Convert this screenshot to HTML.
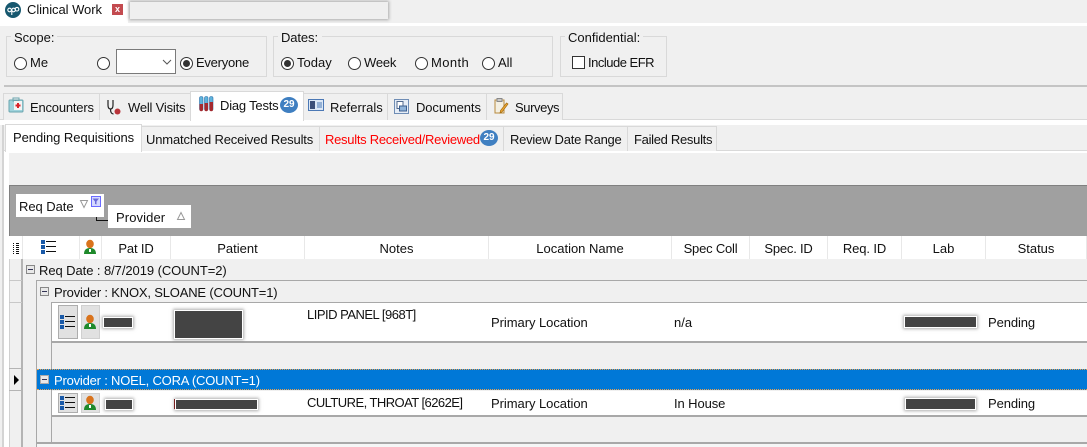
<!DOCTYPE html>
<html><head><meta charset="utf-8">
<style>
html,body{margin:0;padding:0;}
body{width:1087px;height:447px;overflow:hidden;position:relative;background:#f0f0f0;font-family:"Liberation Sans",sans-serif;font-size:13px;color:#111;}
.b{position:absolute;box-sizing:border-box;}
.t{position:absolute;white-space:nowrap;line-height:16px;height:16px;}
.c{position:absolute;white-space:nowrap;line-height:16px;height:16px;text-align:center;}
.r{position:absolute;width:13px;height:13px;box-sizing:border-box;border:1px solid #333;border-radius:50%;background:#fff;}
.r.on:after{content:"";position:absolute;left:2px;top:2px;width:7px;height:7px;border-radius:50%;background:#333;}
.g{position:absolute;box-sizing:border-box;border:1px solid #d9d9d9;}
.tab{position:absolute;box-sizing:border-box;border:1px solid #d9d9d9;border-bottom:none;background:#f0f0f0;}
.red{position:absolute;background:#444;border:1px solid #fff;box-shadow:0 0 3px 1px rgba(120,120,120,.6);box-sizing:border-box;}
.badge{position:absolute;border-radius:50%;background:#3f7fc1;color:#fff;font-size:10px;font-weight:bold;text-align:center;}
svg{position:absolute;overflow:visible;}
</style></head><body>

<!-- top strip -->
<div class="b" style="left:0;top:0;width:1087px;height:22px;background:#f0f0f0;"></div>
<div class="b" style="left:0;top:0;width:128px;height:25px;background:#fff;"></div>
<div class="b" style="left:0;top:23px;width:1087px;height:3px;background:#fff;"></div>
<div class="b" style="left:130px;top:2px;width:258px;height:17px;background:#efefef;box-shadow:0 0 3px 1px #aaa;"></div>
<svg style="left:5px;top:2px" width="16" height="16" viewBox="0 0 16 16"><circle cx="8" cy="8" r="8" fill="#17586f"/><circle cx="4.600" cy="8" r="1.800" fill="none" stroke="#fff" stroke-width="1.100"/><circle cx="8.600" cy="8" r="1.800" fill="none" stroke="#fff" stroke-width="1.100"/><path d="M6.800 8v5" stroke="#fff" stroke-width="1.100"/><circle cx="12" cy="7.200" r="1.800" fill="none" stroke="#fff" stroke-width="1.100"/></svg>
<div class="t" style="left:27px;top:2px;letter-spacing:-.05px;">Clinical Work</div>
<div class="b" style="left:112px;top:4px;width:11px;height:11px;background:#c34a4f;color:#fff;font-size:9px;font-weight:bold;line-height:10px;text-align:center;">x</div>

<!-- filter group boxes -->
<div class="g" style="left:6px;top:36px;width:261px;height:41px;"></div>
<div class="b" style="left:11px;top:30px;width:46px;height:14px;background:#f0f0f0;"></div>
<div class="t" style="left:14px;top:30px;">Scope:</div>
<div class="r" style="left:14px;top:57px;"></div><div class="t" style="left:30px;top:55px;letter-spacing:.1px;">Me</div>
<div class="r" style="left:97px;top:57px;"></div>
<div class="b" style="left:116px;top:49px;width:60px;height:25px;background:#fff;border:1px solid #7a7a7a;"></div>
<svg style="left:162px;top:59px" width="10" height="6"><path d="M1 1l4 4 4-4" fill="none" stroke="#555"/></svg>
<div class="r on" style="left:180px;top:57px;"></div><div class="t" style="left:196px;top:55px;letter-spacing:-.25px;">Everyone</div>

<div class="g" style="left:273px;top:36px;width:280px;height:41px;"></div>
<div class="b" style="left:278px;top:30px;width:44px;height:14px;background:#f0f0f0;"></div>
<div class="t" style="left:281px;top:30px;letter-spacing:-.1px;">Dates:</div>
<div class="r on" style="left:281px;top:57px;"></div><div class="t" style="left:297px;top:55px;">Today</div>
<div class="r" style="left:348px;top:57px;"></div><div class="t" style="left:364px;top:55px;letter-spacing:-.2px;">Week</div>
<div class="r" style="left:415px;top:57px;"></div><div class="t" style="left:431px;top:55px;letter-spacing:.4px;">Month</div>
<div class="r" style="left:482px;top:57px;"></div><div class="t" style="left:498px;top:55px;">All</div>

<div class="g" style="left:560px;top:36px;width:107px;height:41px;"></div>
<div class="b" style="left:565px;top:30px;width:78px;height:14px;background:#f0f0f0;"></div>
<div class="t" style="left:568px;top:30px;">Confidential:</div>
<div class="b" style="left:572px;top:56px;width:13px;height:13px;background:#fff;border:1px solid #333;"></div>
<div class="t" style="left:588px;top:55px;letter-spacing:-.5px;">Include EFR</div>

<div class="b" style="left:4px;top:85px;width:1083px;height:2px;background:#c4c4c4;"></div>

<!-- main tabs -->
<div class="b" style="left:0;top:119px;width:1087px;height:1px;background:#d9d9d9;"></div>
<div class="b" style="left:0;top:120px;width:1087px;height:5px;background:#fff;"></div>
<div class="tab" style="left:3px;top:93px;width:97px;height:27px;"></div>
<div class="tab" style="left:99px;top:93px;width:92px;height:27px;"></div>
<div class="tab" style="left:190px;top:91px;width:114px;height:30px;background:#fff;"></div>
<div class="tab" style="left:303px;top:93px;width:85px;height:27px;"></div>
<div class="tab" style="left:387px;top:93px;width:100px;height:27px;"></div>
<div class="tab" style="left:486px;top:93px;width:77px;height:27px;"></div>

<svg style="left:8px;top:97px" width="16" height="17" viewBox="0 0 16 17"><rect x="1" y="3" width="14" height="12" rx="1" fill="#9fd3dc" stroke="#6aa5ae"/><rect x="5" y="1" width="6" height="3" fill="none" stroke="#6aa5ae"/><rect x="6" y="4" width="8" height="9" fill="#f4f4f4"/><path d="M10 6v5M7.500 8.500h5" stroke="#d8232a" stroke-width="2"/></svg>
<div class="t" style="left:30px;top:100px;letter-spacing:-.2px;">Encounters</div>
<svg style="left:106px;top:99px" width="16" height="17" viewBox="0 0 16 17"><path d="M2 1v5c0 3 1 4 2.500 4S7 9 7 6V1M4.500 10c0 3 1 5 3 5" fill="none" stroke="#222" stroke-width="1.200"/><circle cx="11.500" cy="12.500" r="3" fill="#b8343a"/></svg>
<div class="t" style="left:128px;top:100px;letter-spacing:-.2px;">Well Visits</div>
<svg style="left:199px;top:96px" width="15" height="16" viewBox="0 0 15 16"><g stroke="#2a6ea8" stroke-width=".6"><rect x="0.500" y="0.500" width="3.500" height="14" rx="1.500" fill="#5fb3dc"/><rect x="5.500" y="0.500" width="3.500" height="14" rx="1.500" fill="#5fb3dc"/><rect x="10.500" y="0.500" width="3.500" height="14" rx="1.500" fill="#5fb3dc"/></g><path d="M.5 8h3.500v5.500a1.700 1.700 0 0 1-3.500 0zM5.500 7h3.500v6.500a1.700 1.700 0 0 1-3.500 0zM10.500 6h3.500v7.500a1.700 1.700 0 0 1-3.500 0z" fill="#a52a2f"/></svg>
<div class="t" style="left:220px;top:98px;letter-spacing:-.2px;">Diag Tests</div>
<div class="badge" style="left:280px;top:97px;width:18px;height:16px;line-height:16px;">29</div>
<svg style="left:308px;top:99px" width="16" height="13" viewBox="0 0 16 13"><rect x=".5" y=".5" width="15" height="11" fill="#dbe7f5" stroke="#4b78b5"/><rect x="2" y="2" width="5" height="8" fill="#3b4f78"/><path d="M9 4h5M9 6h5M9 8h5" stroke="#4b78b5"/></svg>
<div class="t" style="left:330px;top:100px;">Referrals</div>
<svg style="left:394px;top:99px" width="16" height="16" viewBox="0 0 16 16"><rect x=".5" y=".5" width="14" height="14" fill="#e6edf6" stroke="#6f8db5"/><rect x="3" y="2.500" width="6" height="7" fill="#fff" stroke="#50698f"/><rect x="5.500" y="7" width="7" height="5" fill="#8fb3d9" stroke="#3d5f8f"/></svg>
<div class="t" style="left:416px;top:100px;letter-spacing:-.1px;">Documents</div>
<svg style="left:494px;top:98px" width="16" height="17" viewBox="0 0 16 17"><rect x="1" y="2" width="9" height="13" fill="#f3efe2" stroke="#b78a3d"/><rect x="3" y="0.500" width="5" height="3" fill="#c9c9c9" stroke="#888"/><path d="M14 6l-6 8-2 1 .5-2.500 6-7.500z" fill="#eda733" stroke="#a46c12" stroke-width=".7"/></svg>
<div class="t" style="left:515px;top:100px;letter-spacing:-.4px;">Surveys</div>

<!-- secondary tabs -->
<div class="b" style="left:0;top:150px;width:1087px;height:1px;background:#d9d9d9;"></div>
<div class="b" style="left:0;top:151px;width:1087px;height:2px;background:#fff;"></div>
<div class="tab" style="left:5px;top:124px;width:137px;height:28px;background:#fff;"></div>
<div class="tab" style="left:141px;top:126px;width:179px;height:25px;"></div>
<div class="tab" style="left:319px;top:126px;width:185px;height:25px;"></div>
<div class="tab" style="left:503px;top:126px;width:125px;height:25px;"></div>
<div class="tab" style="left:627px;top:126px;width:90px;height:25px;"></div>
<div class="t" style="left:13px;top:130px;letter-spacing:-.05px;">Pending Requisitions</div>
<div class="t" style="left:146px;top:132px;letter-spacing:-.16px;">Unmatched Received Results</div>
<div class="t" style="left:325px;top:132px;color:#f00;letter-spacing:-.28px;">Results Received/Reviewed</div>
<div class="badge" style="left:480px;top:130px;width:18px;height:16px;line-height:15px;">29</div>
<div class="t" style="left:510px;top:132px;letter-spacing:-.24px;">Review Date Range</div>
<div class="t" style="left:634px;top:132px;letter-spacing:-.3px;">Failed Results</div>

<!-- left strip -->
<div class="b" style="left:0;top:153px;width:9px;height:294px;background:#fff;"></div>
<div class="b" style="left:0;top:125px;width:2px;height:322px;background:#f0f0f0;"></div>
<div class="b" style="left:2px;top:125px;width:2px;height:322px;background:#d4d4d4;"></div>

<!-- group-by band -->
<div class="b" style="left:9px;top:185px;width:1078px;height:51px;background:#a0a0a0;border-top:1px solid #808080;border-left:1px solid #808080;"></div>
<div class="b" style="left:96px;top:212px;width:1px;height:9px;background:#111;"></div>
<div class="b" style="left:96px;top:220px;width:12px;height:1px;background:#111;"></div>
<div class="b" style="left:16px;top:194px;width:88px;height:23px;background:#fff;"></div>
<div class="t" style="left:19px;top:199px;letter-spacing:-.05px;">Req Date</div>
<svg style="left:80px;top:200px" width="9" height="8"><path d="M.5.500h7l-3.500 7z" fill="none" stroke="#999"/></svg>
<div class="b" style="left:91px;top:196px;width:10px;height:11px;background:#d5d9ff;border:1px solid #6a6aff;"></div>
<svg style="left:92px;top:198px" width="8" height="7"><path d="M.5.500h6.500L4.500 3.500V6.500L3 6V3.500z" fill="#6a6ad8"/></svg>
<div class="b" style="left:108px;top:205px;width:83px;height:23px;background:#fff;"></div>
<div class="t" style="left:116px;top:210px;letter-spacing:.1px;">Provider</div>
<svg style="left:177px;top:212px" width="9" height="8"><path d="M.5 7.500h7L4 .5z" fill="none" stroke="#999"/></svg>

<!-- header -->
<div class="b" style="left:9px;top:236px;width:1078px;height:23px;background:#fff;"></div>
<div class="b" style="left:22px;top:236px;width:1px;height:23px;background:#e8e8e8;"></div>
<div class="b" style="left:79px;top:236px;width:1px;height:23px;background:#e8e8e8;"></div>
<div class="b" style="left:101px;top:236px;width:1px;height:23px;background:#e8e8e8;"></div>
<div class="b" style="left:170px;top:236px;width:1px;height:23px;background:#e8e8e8;"></div>
<div class="b" style="left:304px;top:236px;width:1px;height:23px;background:#e8e8e8;"></div>
<div class="b" style="left:488px;top:236px;width:1px;height:23px;background:#e8e8e8;"></div>
<div class="b" style="left:671px;top:236px;width:1px;height:23px;background:#e8e8e8;"></div>
<div class="b" style="left:749px;top:236px;width:1px;height:23px;background:#e8e8e8;"></div>
<div class="b" style="left:827px;top:236px;width:1px;height:23px;background:#e8e8e8;"></div>
<div class="b" style="left:901px;top:236px;width:1px;height:23px;background:#e8e8e8;"></div>
<div class="b" style="left:985px;top:236px;width:1px;height:23px;background:#e8e8e8;"></div>
<div class="b" style="left:1086px;top:236px;width:1px;height:23px;background:#e8e8e8;"></div>
<svg style="left:13px;top:243px" width="6" height="11"><path d="M0 .5h1M3 .5h3M0 2.500h1M3 2.500h3M0 4.500h1M3 4.500h3M0 6.500h1M3 6.500h3M0 8.500h1M3 8.500h3M0 10.500h1M3 10.500h3" stroke="#111"/></svg>
<svg style="left:41px;top:240px" width="16" height="14" viewBox="0 0 16 14"><g fill="#1a5aa8"><rect width="4" height="4"/><rect y="5" width="4" height="4"/><rect y="10" width="4" height="4"/></g><path d="M5 1.500h10M5 6.500h10M5 11.500h10" stroke="#111"/></svg>
<svg style="left:84px;top:240px" width="12" height="14" viewBox="0 0 12 14"><ellipse cx="6" cy="4" rx="3.800" ry="4.200" fill="#d9731c"/><path d="M0 14c0-4 2-6 6-6s6 2 6 6z" fill="#1f8a2c"/><rect x="5" y="9" width="2" height="3" fill="#fff"/></svg>
<div class="c" style="left:102px;top:241px;width:68px;letter-spacing:-.15px;">Pat ID</div>
<div class="c" style="left:171px;top:241px;width:133px;">Patient</div>
<div class="c" style="left:305px;top:241px;width:183px;">Notes</div>
<div class="c" style="left:489px;top:241px;width:182px;">Location Name</div>
<div class="c" style="left:672px;top:241px;width:77px;letter-spacing:-.2px;">Spec Coll</div>
<div class="c" style="left:750px;top:241px;width:77px;letter-spacing:-.2px;">Spec. ID</div>
<div class="c" style="left:828px;top:241px;width:73px;letter-spacing:-.1px;">Req. ID</div>
<div class="c" style="left:902px;top:241px;width:83px;">Lab</div>
<div class="c" style="left:986px;top:241px;width:100px;">Status</div>

<!-- selector & indent lines -->
<div class="b" style="left:9px;top:259px;width:1px;height:188px;background:#d0d0d0;"></div>
<div class="b" style="left:21px;top:259px;width:2px;height:188px;background:#b4b4b4;"></div>
<div class="b" style="left:9px;top:280px;width:13px;height:1px;background:#c8c8c8;"></div>
<div class="b" style="left:9px;top:302px;width:13px;height:1px;background:#c8c8c8;"></div>
<div class="b" style="left:9px;top:368px;width:13px;height:1px;background:#b4b4b4;"></div>
<div class="b" style="left:9px;top:390px;width:13px;height:1px;background:#b4b4b4;"></div>
<svg style="left:14px;top:375px" width="5" height="10"><path d="M0 0l5 5-5 5z" fill="#000"/></svg>
<div class="b" style="left:36px;top:280px;width:1px;height:167px;background:#a8a8a8;"></div>
<div class="b" style="left:51px;top:302px;width:1px;height:67px;background:#a8a8a8;"></div>
<div class="b" style="left:51px;top:390px;width:1px;height:53px;background:#a8a8a8;"></div>

<!-- rows -->
<div class="b" style="left:36px;top:280px;width:1051px;height:1px;background:#a8a8a8;"></div>
<div class="b" style="left:52px;top:302px;width:1035px;height:1px;background:#a8a8a8;"></div>
<div class="b" style="left:26px;top:265px;width:9px;height:9px;background:#e8e8e8;border:1px solid #888;"></div>
<div class="b" style="left:28px;top:269px;width:5px;height:1px;background:#335;"></div>
<div class="t" style="left:39px;top:263px;letter-spacing:-.07px;">Req Date : 8/7/2019 (COUNT=2)</div>
<div class="b" style="left:40px;top:287px;width:9px;height:9px;background:#e8e8e8;border:1px solid #888;"></div>
<div class="b" style="left:42px;top:291px;width:5px;height:1px;background:#335;"></div>
<div class="t" style="left:54px;top:285px;letter-spacing:-.18px;">Provider : KNOX, SLOANE (COUNT=1)</div>

<div class="b" style="left:52px;top:303px;width:1035px;height:38px;background:#fff;"></div>
<div class="b" style="left:52px;top:341px;width:1035px;height:2px;background:#a8a8a8;"></div>
<div class="b" style="left:37px;top:369px;width:1050px;height:21px;background:#0078d7;border-top:1px dotted #e8a050;border-bottom:1px dotted #e8a050;"></div>
<div class="b" style="left:40px;top:375px;width:9px;height:9px;background:#e8e8e8;border:1px solid #aaa;"></div>
<div class="b" style="left:42px;top:379px;width:5px;height:1px;background:#335;"></div>
<div class="t" style="left:54px;top:373px;color:#fff;letter-spacing:-.2px;">Provider : NOEL, CORA (COUNT=1)</div>
<div class="b" style="left:52px;top:391px;width:1035px;height:24px;background:#fff;"></div>
<div class="b" style="left:52px;top:415px;width:1035px;height:2px;background:#a8a8a8;"></div>
<div class="b" style="left:37px;top:442px;width:1050px;height:2px;background:#a8a8a8;"></div>
<div class="b" style="left:37px;top:444px;width:1050px;height:3px;background:#f6f6f6;"></div>

<!-- row buttons -->
<div class="b" style="left:58px;top:305px;width:20px;height:34px;background:#e1e1e1;border:1px solid #adadad;"></div>
<div class="b" style="left:81px;top:305px;width:19px;height:34px;background:#e1e1e1;border:1px solid #d0d0d0;"></div>
<svg style="left:60px;top:315px" width="16" height="14" viewBox="0 0 16 14"><g fill="#1a5aa8"><rect width="4" height="4"/><rect y="5" width="4" height="4"/><rect y="10" width="4" height="4"/></g><path d="M5 1.500h10M5 6.500h10M5 11.500h10" stroke="#111"/></svg>
<svg style="left:84px;top:315px" width="12" height="14" viewBox="0 0 12 14"><ellipse cx="6" cy="4" rx="3.800" ry="4.200" fill="#d9731c"/><path d="M0 14c0-4 2-6 6-6s6 2 6 6z" fill="#1f8a2c"/><rect x="5" y="9" width="2" height="3" fill="#fff"/></svg>
<div class="b" style="left:58px;top:393px;width:20px;height:20px;background:#e1e1e1;border:1px solid #adadad;"></div>
<div class="b" style="left:81px;top:393px;width:19px;height:20px;background:#e1e1e1;border:1px solid #d0d0d0;"></div>
<svg style="left:60px;top:396px" width="16" height="14" viewBox="0 0 16 14"><g fill="#1a5aa8"><rect width="4" height="4"/><rect y="5" width="4" height="4"/><rect y="10" width="4" height="4"/></g><path d="M5 1.500h10M5 6.500h10M5 11.500h10" stroke="#111"/></svg>
<svg style="left:84px;top:396px" width="12" height="14" viewBox="0 0 12 14"><ellipse cx="6" cy="4" rx="3.800" ry="4.200" fill="#d9731c"/><path d="M0 14c0-4 2-6 6-6s6 2 6 6z" fill="#1f8a2c"/><rect x="5" y="9" width="2" height="3" fill="#fff"/></svg>

<!-- redactions -->
<div class="red" style="left:103px;top:317px;width:30px;height:11px;"></div>
<div class="red" style="left:174px;top:310px;width:69px;height:29px;"></div>
<div class="red" style="left:904px;top:316px;width:73px;height:12px;"></div>
<div class="red" style="left:105px;top:399px;width:28px;height:11px;"></div>
<div class="red" style="left:175px;top:399px;width:83px;height:11px;"></div>
<div class="b" style="left:174px;top:399px;width:1px;height:10px;background:#7a2020;"></div>
<div class="red" style="left:905px;top:398px;width:71px;height:12px;"></div>

<!-- data text -->
<div class="t" style="left:307px;top:307px;letter-spacing:-.5px;">LIPID PANEL [968T]</div>
<div class="t" style="left:491px;top:315px;letter-spacing:-.05px;">Primary Location</div>
<div class="t" style="left:674px;top:315px;">n/a</div>
<div class="t" style="left:988px;top:315px;letter-spacing:-.1px;">Pending</div>
<div class="t" style="left:307px;top:395px;letter-spacing:-.55px;">CULTURE, THROAT [6262E]</div>
<div class="t" style="left:491px;top:396px;letter-spacing:-.05px;">Primary Location</div>
<div class="t" style="left:674px;top:396px;letter-spacing:-.1px;">In House</div>
<div class="t" style="left:988px;top:396px;letter-spacing:-.1px;">Pending</div>

</body></html>
